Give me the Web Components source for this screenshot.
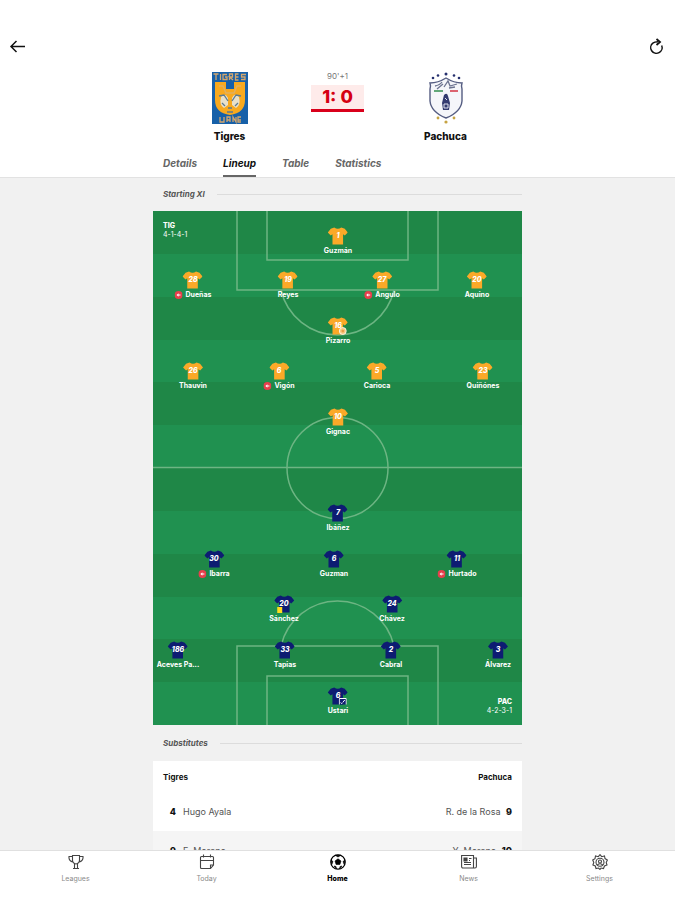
<!DOCTYPE html>
<html lang="en">
<head>
<meta charset="utf-8">
<title>Tigres – Pachuca</title>
<style>
html,body{height:100%;margin:0}
body{font-family:Inter,"Liberation Sans",sans-serif;background:#f1f1f1;color:#111}
</style>
</head>
<body>
<match-screen></match-screen>
<script>
const define=(name,html,setup)=>customElements.define(name,class extends HTMLElement{
  constructor(){
    super();
    const t=document.createElement('template');
    t.innerHTML='<style>*{box-sizing:border-box}</style>'+html;
    this.attachShadow({mode:'open'}).append(t.content.cloneNode(true));
  }
  connectedCallback(){ if(setup) setup(this,this.shadowRoot); }
});

define('team-crest',`<style>
:host{display:flex;flex-direction:column;align-items:center;width:64px;gap:2px;font-size:10px;line-height:16px;font-weight:800}
::slotted(svg){display:block;width:40px;height:56px}
</style><slot name="crest"></slot><slot></slot>`);

define('match-header',`<style>
:host{display:block;flex:none;background:#fff;border-bottom:1px solid #e2e2e2;padding-top:36px}
.bar{display:flex;justify-content:space-between;padding:0 8px}
button{display:block;background:none;border:0;padding:0;width:20px;height:20px;color:#111}
button svg{display:block;width:20px;height:20px}
.teams{display:grid;grid-template-columns:64px 1fr 64px;justify-items:center;width:280px;max-width:100%;margin:14px auto 0}
.mid{text-align:center;font-size:8px;line-height:12px;color:#777}
.score{margin-top:3px;width:53px;height:27px;background:#feebea;border-bottom:3px solid #d9001b;color:#d50012;font-size:18px;font-weight:800;line-height:24px}
nav{display:flex;gap:26px;width:349px;max-width:100%;margin:7px auto 0;font-size:10px;line-height:12px;font-weight:700;font-style:italic}
a{color:#666;text-decoration:none;padding:6px 0;border-bottom:2px solid transparent}
a[aria-current]{color:#111;border-color:#666}
</style>
<div class="bar">
<button aria-label="Back"><svg viewBox="0 0 20 20" fill="none" stroke="currentColor" stroke-width="1.500"><path d="M17 10.500H3.500M8.500 5 3 10.500 8.500 16"/></svg></button>
<button aria-label="Refresh"><svg viewBox="0 0 20 20" fill="none" stroke="currentColor" stroke-width="1.500"><path d="M5.800 7.200A5.700 5.700 0 1 0 14.700 9.500M5.800 7.200Q7.500 5.800 11 5.800"/><path d="M9.500 3 13 6 9.500 9" stroke-width="1.800"/></svg></button>
</div>
<div class="teams"><slot name="home"></slot>
<div class="mid">90'+1<div class="score">1: 0</div></div>
<slot name="away"></slot></div>
<nav><a href="#details">Details</a><a href="#lineup" aria-current="page">Lineup</a><a href="#table">Table</a><a href="#statistics">Statistics</a></nav>`);

define('section-title',`<style>
:host{display:flex;align-items:center;gap:12px;padding-left:10px;font-size:8px;line-height:12px;font-style:italic;font-weight:700;color:#555}
i{flex:1;height:1px;background:#dcdcdc}
</style><slot></slot><i></i>`);

define('player-pin',`<style>
:host{position:absolute;transform:translateX(-50%);display:flex;flex-direction:column;align-items:center;color:#fff;--kit:#fba928}
:host([away]){--kit:#0d1c72}
.shirt{position:relative;display:grid;place-items:center;width:20px;height:18px}
svg{display:block}
.shirt>*{grid-area:1/1}
.kit{width:20px;height:18px;fill:var(--kit)}
b{font-size:7px;line-height:8px;font-style:italic;font-weight:800}
.mark{position:absolute;display:none;width:8px;height:8px;right:1px;bottom:0}
:host([mark]) .mark{display:block}
.mark.card{right:auto;left:3px;width:5px;height:6px;background:#ffdc1e}
.name{display:flex;align-items:center;gap:3px;font-size:7px;line-height:10px;font-weight:700;white-space:nowrap;margin-top:1px}
.out{display:none;width:8px;height:8px}
:host([out]) .out{display:block}
</style>
<div class="shirt"><svg class="kit" viewBox="0 0 20 18"><path d="M6.500 0.500Q10 3 13.500 .5L17 1.800 20 5.500 17 8.500 15.300 7.200V17.500H4.700V7.200L3 8.500 0 5.500 3 1.800Z"/></svg><b></b><span class="mark"></span></div>
<div class="name"><svg class="out" viewBox="0 0 8 8"><circle cx="4" cy="4" r="4" fill="#e63f4c"/><path d="M2 4 4 2.200V3.500H6V4.500H4V5.800Z" fill="#fff"/></svg><slot></slot></div>`,
(el,r)=>{
  r.querySelector('b').textContent=el.getAttribute('number');
  const m=el.getAttribute('mark'),n=r.querySelector('.mark');
  if(m==='card')n.classList.add('card');
  if(m==='ball')n.innerHTML='<svg viewBox="0 0 8 8" width="8" height="8"><circle cx="4" cy="4" r="3.500" fill="#f7c983" stroke="#fff" stroke-width=".8"/><path d="m4 2.500 1.500 1-.6 1.800H3.100L2.500 3.500Z" fill="#e89c47"/></svg>';
  if(m==='goal')n.innerHTML='<svg viewBox="0 0 8 8" width="8" height="8"><path d="M.5 7.500v-6h7v6M2 5.500l1.500 1.500M6 3 4 5.500" fill="#0d1c72" stroke="#fff"/></svg>';
});

define('football-pitch',`<style>
:host{display:block;position:relative;aspect-ratio:369/514;overflow:hidden;background:repeating-linear-gradient(#1f8747 0 8.333%,#209150 8.333% 16.667%)}
.lines{display:block;width:100%;height:100%;fill:none;stroke:#6db583;stroke-width:1.500}
.form{position:absolute;color:#fff;font-size:7px;line-height:9px}
.form b{display:block;font-weight:800}
.tl{left:10px;top:10px}.br{right:10px;bottom:10px;text-align:right}
</style>
<svg class="lines" viewBox="0 0 369 514"><path d="M0 256.500H369M84 0V79H285V0M114 0V49H255V0M128 79A58 58 0 0 0 241 79M84 514V435H285V514M114 514V465H255V514M128 435A58 58 0 0 1 241 435"/><circle cx="184.500" cy="257" r="50.500"/></svg>
<div class="form tl"><b>TIG</b>4-1-4-1</div><slot></slot><div class="form br"><b>PAC</b>4-2-3-1</div>`,
el=>{
  const squad=[[185,16,1,'Guzmán'],[40,60,28,'Dueñas','out'],[135,60,19,'Reyes'],[229,60,27,'Angulo','out'],[324,60,20,'Aquino'],[185,106,16,'Pizarro','ball'],[40,151,26,'Thauvin'],[126,151,6,'Vigón','out'],[224,151,5,'Carioca'],[330,151,23,'Quiñónes'],[185,197,10,'Gignac'],
  [185,293,7,'Ibáñez'],[61,339,30,'Ibarra','out'],[181,339,6,'Guzman'],[304,339,11,'Hurtado','out'],[131,384,20,'Sánchez','card'],[239,384,24,'Chávez'],[25,430,186,'Aceves Pa...'],[132,430,33,'Tapias'],[238,430,2,'Cabral'],[345,430,3,'Álvarez'],[185,476,6,'Ustari','goal']];
  squad.forEach(([x,y,n,name,extra],i)=>{
    const p=document.createElement('player-pin');
    p.style.left=x/3.69+'%';p.style.top=y/5.14+'%';
    p.setAttribute('number',n);
    if(i>10)p.setAttribute('away','');
    if(extra==='out')p.setAttribute('out','');else if(extra)p.setAttribute('mark',extra);
    p.textContent=name;el.append(p);
  });
});

define('subs-table',`<style>
:host{display:block;background:#fff}
table{width:100%;border-collapse:collapse;font-size:9px;line-height:12px;color:#555}
th{height:31px;padding:0 10px;text-align:left;font-size:8px;font-weight:700;color:#111}
td{height:39px;padding:0 10px}
th:last-child,td:last-child{text-align:right}
tr.alt{background:#f5f5f5}
b{display:inline-block;min-width:13px;color:#111;font-weight:800;text-align:right}
td:first-child b{margin-right:7px}td:last-child b{margin-left:3px;min-width:6px}
</style><table><thead><tr><th>Tigres</th><th>Pachuca</th></tr></thead><tbody>
<tr><td><b>4</b>Hugo Ayala</td><td>R. de la Rosa <b>9</b></td></tr>
<tr class="alt"><td><b>9</b>F. Moreno</td><td>Y. Moreno <b>10</b></td></tr>
</tbody></table>`);

define('tab-bar',`<style>
:host{display:grid;grid-template-columns:repeat(5,1fr);flex:none;height:50px;padding:0 10px;background:#fff;border-top:1px solid #e0e0e0}
</style><slot></slot>`);
define('tab-item',`<style>
:host{display:block;color:#8a8a8a}
a{display:flex;flex-direction:column;align-items:center;gap:4px;padding-top:3px;color:inherit;text-decoration:none;font-size:7px;line-height:10px}
:host([active]){color:#000;font-weight:800}
::slotted(svg){display:block;width:16px;height:16px;fill:none;stroke:#444;stroke-width:1.100}
</style><a><slot name="icon"></slot><slot></slot></a>`,(el,r)=>{r.querySelector('a').href='#'+el.textContent.trim().toLowerCase()});

define('match-screen',`<style>
:host{display:flex;flex-direction:column;height:100vh}
main{flex:1;min-height:0;overflow-y:auto;scrollbar-width:none}
.col{width:100%;max-width:369px;margin:0 auto;padding-top:10px}
football-pitch{margin:11px 0 12px}
subs-table{margin-top:12px}
</style>
<match-header>
<team-crest slot="home"><svg slot="crest" viewBox="0 0 40 56"><rect x="2" y="2" width="36" height="52" fill="#1760a8"/><path d="M3.500 4h5M6 4v6M10.500 4v6M17 4.500h-4v5h4V7h-2M19.500 10V4h3v3h-3l3.500 3M28.500 4h-3v6h3M25.500 7h3M36 4.500h-4.500V7H35v2.500h-4" fill="none" stroke="#d3a66d" stroke-width="1.300"/><path d="M5 12H16V19H24V12H35V30Q35 43 20 45 5 43 5 30Z" fill="#f8a91e"/><path d="M9 16h4l3 7h8l3-7h4" fill="none" stroke="#e0b060" stroke-width="1.500"/><path d="M11 27Q15 22 18 28V35L14 38Q9 35 11 27ZM29 27Q25 22 22 28V35L26 38Q31 35 29 27Z" fill="#e9e0c9"/><path d="M9 26 14 25 18 31M31 26 26 25 22 31M12 33l3 3M28 33l-3 3M18 38h4M17 42h6" fill="none" stroke="#5b7a90" stroke-width="1.300"/><path d="M10 47v5h4v-5M17 52v-5h3v5M17 50h3M23 52v-5l3 5v-5M31 47h-3v5h3M28 50h3" fill="none" stroke="#d3a66d" stroke-width="1.300"/></svg>Tigres</team-crest>
<team-crest slot="away"><svg slot="crest" viewBox="0 0 40 56"><g fill="#26306e"><circle cx="7" cy="8" r="1.300"/><circle cx="12" cy="5.500" r="1.300"/><circle cx="20" cy="4" r="1.500"/><circle cx="28" cy="5.500" r="1.300"/><circle cx="33" cy="8" r="1.300"/></g><path d="M4 13Q12 13 20 8 28 13 36 13 35 16 36 19V31Q35 42 20 48 5 42 4 31V19Q5 16 4 13Z" fill="#f5f6fa" stroke="#555d82" stroke-width="1.400"/><path d="M9 16q5-1 7-4M18 17l4-6 2 5 7-2M11 19l6-5M23 18l6-1" fill="none" stroke="#6c7390" stroke-width="1.300"/><path d="M8 21h9" stroke="#62a879" stroke-width="2"/><path d="M24 21h8" stroke="#dc6470" stroke-width="2"/><path d="M18 25q3-3 4 1l2 7-1 7h-6l-1-7Z" fill="#343b70"/><path d="M18 34h4v4h-4ZM19 28l2 2" fill="none" stroke="#dfe3ef"/><g fill="#c6a342"><circle cx="12" cy="48" r="1.400"/><circle cx="20" cy="52" r="1.600"/><circle cx="28" cy="48" r="1.400"/></g></svg>Pachuca</team-crest>
</match-header>
<main><div class="col">
<section-title>Starting XI</section-title>
<football-pitch></football-pitch>
<section-title>Substitutes</section-title>
<subs-table></subs-table>
</div></main>
<tab-bar>
<tab-item><svg slot="icon" viewBox="0 0 16 16"><path d="M4.500 1.500h7V6Q11.500 9.500 8 10 4.500 9.500 4.500 6ZM4.500 2.500H1Q.5 7 5 8M11.500 2.500H15Q15.500 7 11 8M6.500 10v4M9.500 10v4M5 14.500h6"/></svg>Leagues</tab-item>
<tab-item><svg slot="icon" viewBox="0 0 16 16"><path d="M1.500 3.500Q1.500 2.500 2.500 2.500H13.500Q14.500 2.500 14.500 3.500V11L11.500 14.500H2.500Q1.500 14.500 1.500 13.500ZM1.500 6.500h13M4.500 .5v3M11.500 .5v3M14.500 11h-3v3.500"/></svg>Today</tab-item>
<tab-item active><svg slot="icon" viewBox="0 0 16 16"><circle cx="8" cy="8" r="7.200" style="stroke:#000;stroke-width:1.300"/><path d="M8 4.800 11 7 9.900 10.500H6.100L5 7ZM5 1.200 8 3 11 1.200ZM1 6 3 7.500 1.800 10.500ZM15 6 13 7.500 14.200 10.500ZM4 12 6 12.500 6.500 15ZM12 12 10 12.500 9.500 15Z" style="fill:#000;stroke:#000;stroke-width:.6"/></svg>Home</tab-item>
<tab-item><svg slot="icon" viewBox="0 0 16 16"><path d="M.6 1.500H12.500V14H2Q.6 14 .6 12.500ZM12.500 4H15.400V12.500Q15.400 14 14 14H12M3 10.500h7M3 8.500h7M8 4.500h2.500M8 6.500h1"/><path d="M3 4h3v3H3z" style="fill:#444"/></svg>News</tab-item>
<tab-item><svg slot="icon" viewBox="0 0 16 16"><path d="M8 .7 9.700 2.700 12.500 2 13 4.600 15.400 6 14.200 8.500 15 11 12.500 12 11.500 14.500 9 14 8 15.500 6.500 14 4 14.500 3.300 12 .9 11 1.800 8.500.7 6 3 4.600 3.500 2 6.300 2.700Z"/><circle cx="8" cy="8.300" r="4"/><circle cx="8" cy="7.500" r="1.500"/><path d="M5.300 11Q8 8.500 10.700 11"/></svg>Settings</tab-item>
</tab-bar>`);
</script>
</body>
</html>
